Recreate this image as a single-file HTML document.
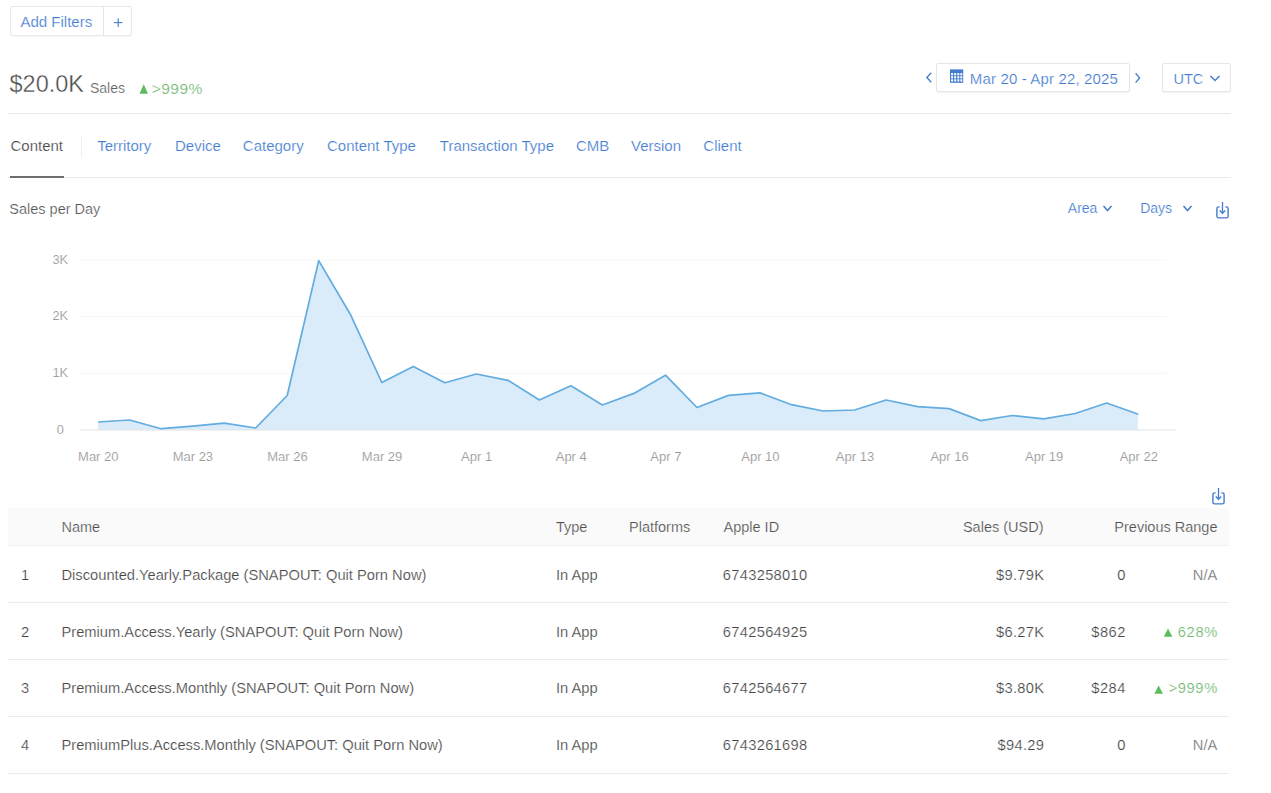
<!DOCTYPE html>
<html><head><meta charset="utf-8"><style>
html,body{margin:0;padding:0;background:#fff;width:1271px;height:793px;overflow:hidden;position:relative;font-family:"Liberation Sans",sans-serif;}
.t{position:absolute;white-space:nowrap;line-height:1;-webkit-text-stroke:0.2px #fff;}
.box{position:absolute;box-sizing:border-box;}
.hl{position:absolute;height:1px;}
.vl{position:absolute;width:1px;}
</style></head><body>
<div class="box" style="left:9.8px;top:6px;width:122.6px;height:29.6px;border:1px solid #e8e8e8;border-radius:2px;box-shadow:0 1px 1px rgba(0,0,0,0.03)"></div>
<div class="vl" style="left:103px;top:7px;height:28px;background:#e6e6e6"></div>
<div class="t" style="left:20.50px;top:14.30px;font-size:15px;color:#437bcf;">Add Filters</div>
<svg style="position:absolute;left:110px;top:14px" width="16" height="16"><line x1="4" y1="8.6" x2="12.4" y2="8.6" stroke="#437bcf" stroke-width="1.1"/><line x1="8.2" y1="4.3" x2="8.2" y2="12.9" stroke="#437bcf" stroke-width="1.1"/></svg>
<div class="t" style="left:9.50px;top:73.11px;font-size:23.5px;color:#4a4a4a;-webkit-text-stroke:0.35px #fff">$20.0K</div>
<div class="t" style="left:90.00px;top:81.15px;font-size:14px;color:#606060;">Sales</div>
<svg style="position:absolute;left:139px;top:84px" width="10" height="10"><polygon points="0.5,9.8 4.75,0.3 9,9.8" fill="#5cbd5c"/></svg>
<div class="t" style="left:151.80px;top:80.88px;font-size:15.5px;color:#6db66d;letter-spacing:0.45px">&gt;999%</div>
<div class="hl" style="left:8px;top:113px;width:1223px;background:#e8e8e8"></div>
<svg style="position:absolute;left:924px;top:72px" width="10" height="14"><polyline points="7.2,0.8 2.9,5.5 7.2,10.2" fill="none" stroke="#437bcf" stroke-width="1.35"/></svg>
<div class="box" style="left:936.3px;top:63px;width:193.5px;height:28.7px;border:1px solid #e6e6e6;border-radius:2px;box-shadow:0 1px 1px rgba(0,0,0,0.05)"></div>
<svg style="position:absolute;left:950px;top:69px" width="14" height="14" viewBox="0 0 14 14"><rect x="0" y="0.4" width="13.2" height="13.4" fill="#437bcf"/><rect x="1.1" y="4.1" width="2" height="2.2" fill="#fff"/><rect x="4.2" y="4.1" width="2" height="2.2" fill="#fff"/><rect x="7.3" y="4.1" width="2" height="2.2" fill="#fff"/><rect x="10.3" y="4.1" width="2" height="2.2" fill="#fff"/><rect x="1.1" y="7.2" width="2" height="2.2" fill="#fff"/><rect x="4.2" y="7.2" width="2" height="2.2" fill="#fff"/><rect x="7.3" y="7.2" width="2" height="2.2" fill="#fff"/><rect x="10.3" y="7.2" width="2" height="2.2" fill="#fff"/><rect x="1.1" y="10.3" width="2" height="2.2" fill="#fff"/><rect x="4.2" y="10.3" width="2" height="2.2" fill="#fff"/><rect x="7.3" y="10.3" width="2" height="2.2" fill="#fff"/><rect x="10.3" y="10.3" width="2" height="2.2" fill="#fff"/></svg>
<div class="t" style="left:969.80px;top:70.60px;font-size:15px;color:#437bcf;letter-spacing:0.15px">Mar 20 - Apr 22, 2025</div>
<svg style="position:absolute;left:1133px;top:72px" width="10" height="14"><polyline points="2.6,1.2 6.6,5.9 2.6,10.6" fill="none" stroke="#437bcf" stroke-width="1.35"/></svg>
<div class="box" style="left:1162.3px;top:63px;width:68.5px;height:28.7px;border:1px solid #e6e6e6;border-radius:2px;box-shadow:0 1px 1px rgba(0,0,0,0.05)"></div>
<div class="t" style="left:1173.50px;top:71.93px;font-size:14.5px;color:#437bcf;">UTC</div>
<svg style="position:absolute;left:1209px;top:74px" width="13" height="9"><polyline points="1.5,2 6,6.5 10.5,2" fill="none" stroke="#437bcf" stroke-width="1.5"/></svg>
<div class="t" style="left:10.50px;top:137.90px;font-size:15px;color:#454545;">Content</div>
<div class="t" style="left:97.20px;top:137.90px;font-size:15px;color:#437bcf;">Territory</div>
<div class="t" style="left:175.00px;top:137.90px;font-size:15px;color:#437bcf;">Device</div>
<div class="t" style="left:242.80px;top:137.90px;font-size:15px;color:#437bcf;">Category</div>
<div class="t" style="left:327.00px;top:137.90px;font-size:15px;color:#437bcf;">Content Type</div>
<div class="t" style="left:439.80px;top:137.90px;font-size:15px;color:#437bcf;">Transaction Type</div>
<div class="t" style="left:576.00px;top:137.90px;font-size:15px;color:#437bcf;">CMB</div>
<div class="t" style="left:631.00px;top:137.90px;font-size:15px;color:#437bcf;">Version</div>
<div class="t" style="left:703.30px;top:137.90px;font-size:15px;color:#437bcf;">Client</div>
<div class="vl" style="left:81px;top:135px;height:23px;background:#f1f1f1"></div>
<div class="hl" style="left:8px;top:177px;width:1223px;background:#ebebeb"></div>
<div class="box" style="left:9.5px;top:176px;width:54.5px;height:2px;background:#6e6e6e"></div>
<div class="t" style="left:9.30px;top:201.93px;font-size:14.5px;color:#555;">Sales per Day</div>
<div class="t" style="left:1067.80px;top:200.95px;font-size:14px;color:#437bcf;">Area</div>
<svg style="position:absolute;left:1102px;top:204px" width="11" height="9"><polyline points="1.5,2 5.5,6.5 9.5,2" fill="none" stroke="#437bcf" stroke-width="1.5"/></svg>
<div class="t" style="left:1140.20px;top:200.95px;font-size:14px;color:#437bcf;">Days</div>
<svg style="position:absolute;left:1182px;top:204px" width="11" height="9"><polyline points="1.5,2 5.5,6.5 9.5,2" fill="none" stroke="#437bcf" stroke-width="1.5"/></svg>
<svg style="position:absolute;left:1215px;top:201px" width="16" height="19" viewBox="0 0 16 19"><path d="M4.6 5.9 H3.6 Q1.9 5.9 1.9 7.6 V15.2 Q1.9 16.9 3.6 16.9 H11.4 Q13.1 16.9 13.1 15.2 V7.6 Q13.1 5.9 11.4 5.9 H10.4" fill="none" stroke="#437bcf" stroke-width="1.4"/><line x1="7.5" y1="1" x2="7.5" y2="12" stroke="#437bcf" stroke-width="1.3"/><polyline points="4.8,9.5 7.5,12.2 10.2,9.5" fill="none" stroke="#437bcf" stroke-width="1.4"/></svg>
<svg style="position:absolute;left:0;top:0" width="1271" height="793"><line x1="78" y1="260" x2="1167" y2="260" stroke="#f6f6f6" stroke-width="1"/><line x1="78" y1="316.7" x2="1167" y2="316.7" stroke="#f6f6f6" stroke-width="1"/><line x1="78" y1="373.3" x2="1167" y2="373.3" stroke="#f6f6f6" stroke-width="1"/><polygon points="98,430 98.1,422.0 129.6,420.0 161.1,428.7 192.7,426.2 224.2,423.2 255.7,428.0 287.2,395.5 318.7,260.6 350.3,314.2 381.8,382.5 413.3,366.4 444.8,382.8 476.3,374.0 507.9,380.3 539.4,400.0 570.9,385.8 602.4,405.0 633.9,393.4 665.5,375.2 697.0,407.5 728.5,395.4 760.0,392.9 791.5,404.7 823.1,411.0 854.6,410.0 886.1,400.0 917.6,406.7 949.1,408.6 980.7,420.6 1012.2,415.5 1043.7,418.8 1075.2,413.5 1106.7,403.0 1138.3,414.3 1137.5,430" fill="#daecfa"/><line x1="80" y1="430" x2="1176" y2="430" stroke="#e3e3e3" stroke-width="1.2"/><polyline points="98.1,422.0 129.6,420.0 161.1,428.7 192.7,426.2 224.2,423.2 255.7,428.0 287.2,395.5 318.7,260.6 350.3,314.2 381.8,382.5 413.3,366.4 444.8,382.8 476.3,374.0 507.9,380.3 539.4,400.0 570.9,385.8 602.4,405.0 633.9,393.4 665.5,375.2 697.0,407.5 728.5,395.4 760.0,392.9 791.5,404.7 823.1,411.0 854.6,410.0 886.1,400.0 917.6,406.7 949.1,408.6 980.7,420.6 1012.2,415.5 1043.7,418.8 1075.2,413.5 1106.7,403.0 1138.3,414.3" fill="none" stroke="#62ace0" stroke-width="1.7" stroke-linejoin="round"/></svg>
<div class="t" style="left:60.30px;transform:translateX(-50%);top:253.76px;font-size:12.8px;color:#9c9c9c;-webkit-text-stroke:0.1px #fff">3K</div>
<div class="t" style="left:60.30px;transform:translateX(-50%);top:310.46px;font-size:12.8px;color:#9c9c9c;-webkit-text-stroke:0.1px #fff">2K</div>
<div class="t" style="left:60.30px;transform:translateX(-50%);top:367.06px;font-size:12.8px;color:#9c9c9c;-webkit-text-stroke:0.1px #fff">1K</div>
<div class="t" style="left:60.30px;transform:translateX(-50%);top:423.76px;font-size:12.8px;color:#9c9c9c;-webkit-text-stroke:0.1px #fff">0</div>
<div class="t" style="left:98.30px;transform:translateX(-50%);top:449.90px;font-size:13px;color:#9c9c9c;-webkit-text-stroke:0.1px #fff">Mar 20</div>
<div class="t" style="left:192.89px;transform:translateX(-50%);top:449.90px;font-size:13px;color:#9c9c9c;-webkit-text-stroke:0.1px #fff">Mar 23</div>
<div class="t" style="left:287.48px;transform:translateX(-50%);top:449.90px;font-size:13px;color:#9c9c9c;-webkit-text-stroke:0.1px #fff">Mar 26</div>
<div class="t" style="left:382.07px;transform:translateX(-50%);top:449.90px;font-size:13px;color:#9c9c9c;-webkit-text-stroke:0.1px #fff">Mar 29</div>
<div class="t" style="left:476.66px;transform:translateX(-50%);top:449.90px;font-size:13px;color:#9c9c9c;-webkit-text-stroke:0.1px #fff">Apr 1</div>
<div class="t" style="left:571.25px;transform:translateX(-50%);top:449.90px;font-size:13px;color:#9c9c9c;-webkit-text-stroke:0.1px #fff">Apr 4</div>
<div class="t" style="left:665.84px;transform:translateX(-50%);top:449.90px;font-size:13px;color:#9c9c9c;-webkit-text-stroke:0.1px #fff">Apr 7</div>
<div class="t" style="left:760.43px;transform:translateX(-50%);top:449.90px;font-size:13px;color:#9c9c9c;-webkit-text-stroke:0.1px #fff">Apr 10</div>
<div class="t" style="left:855.02px;transform:translateX(-50%);top:449.90px;font-size:13px;color:#9c9c9c;-webkit-text-stroke:0.1px #fff">Apr 13</div>
<div class="t" style="left:949.61px;transform:translateX(-50%);top:449.90px;font-size:13px;color:#9c9c9c;-webkit-text-stroke:0.1px #fff">Apr 16</div>
<div class="t" style="left:1044.20px;transform:translateX(-50%);top:449.90px;font-size:13px;color:#9c9c9c;-webkit-text-stroke:0.1px #fff">Apr 19</div>
<div class="t" style="left:1138.79px;transform:translateX(-50%);top:449.90px;font-size:13px;color:#9c9c9c;-webkit-text-stroke:0.1px #fff">Apr 22</div>
<svg style="position:absolute;left:1211px;top:487px" width="16" height="19" viewBox="0 0 16 19"><path d="M4.6 5.9 H3.6 Q1.9 5.9 1.9 7.6 V15.2 Q1.9 16.9 3.6 16.9 H11.4 Q13.1 16.9 13.1 15.2 V7.6 Q13.1 5.9 11.4 5.9 H10.4" fill="none" stroke="#437bcf" stroke-width="1.4"/><line x1="7.5" y1="1" x2="7.5" y2="12" stroke="#437bcf" stroke-width="1.3"/><polyline points="4.8,9.5 7.5,12.2 10.2,9.5" fill="none" stroke="#437bcf" stroke-width="1.4"/></svg>
<div class="box" style="left:8px;top:507.8px;width:1221px;height:38.4px;background:#fafafa;border-bottom:1px solid #f1f1f1"></div>
<div class="t" style="left:61.50px;top:520.23px;font-size:14.5px;color:#4f4f4f;">Name</div>
<div class="t" style="left:556.00px;top:520.23px;font-size:14.5px;color:#4f4f4f;">Type</div>
<div class="t" style="left:629.00px;top:520.23px;font-size:14.5px;color:#4f4f4f;">Platforms</div>
<div class="t" style="left:723.50px;top:520.23px;font-size:14.5px;color:#4f4f4f;">Apple ID</div>
<div class="t" style="right:227.50px;top:520.23px;font-size:14.5px;color:#4f4f4f;">Sales (USD)</div>
<div class="t" style="right:53.50px;top:520.23px;font-size:14.5px;color:#4f4f4f;">Previous Range</div>
<div class="t" style="right:1241.80px;top:568.06px;font-size:14.7px;color:#454545;">1</div>
<div class="t" style="left:61.50px;top:568.06px;font-size:14.7px;color:#454545;">Discounted.Yearly.Package (SNAPOUT: Quit Porn Now)</div>
<div class="t" style="left:556.00px;top:568.06px;font-size:14.7px;color:#454545;">In App</div>
<div class="t" style="left:722.80px;top:568.06px;font-size:14.7px;color:#454545;letter-spacing:0.3px">6743258010</div>
<div class="t" style="right:226.70px;top:568.06px;font-size:14.7px;color:#454545;letter-spacing:0.3px">$9.79K</div>
<div class="t" style="right:145.10px;top:568.06px;font-size:14.7px;color:#454545;letter-spacing:0.5px">0</div>
<div class="t" style="right:53.70px;top:568.06px;font-size:14.7px;color:#707070;">N/A</div>
<div class="hl" style="left:8px;top:602.0px;width:1221px;background:#ebebeb"></div>
<div class="t" style="right:1241.80px;top:624.76px;font-size:14.7px;color:#454545;">2</div>
<div class="t" style="left:61.50px;top:624.76px;font-size:14.7px;color:#454545;">Premium.Access.Yearly (SNAPOUT: Quit Porn Now)</div>
<div class="t" style="left:556.00px;top:624.76px;font-size:14.7px;color:#454545;">In App</div>
<div class="t" style="left:722.80px;top:624.76px;font-size:14.7px;color:#454545;letter-spacing:0.3px">6742564925</div>
<div class="t" style="right:226.70px;top:624.76px;font-size:14.7px;color:#454545;letter-spacing:0.3px">$6.27K</div>
<div class="t" style="right:145.10px;top:624.76px;font-size:14.7px;color:#454545;letter-spacing:0.5px">$862</div>
<div class="t" style="right:53.20px;top:624.76px;font-size:14.7px;color:#6db66d;letter-spacing:0.6px">628%</div>
<div class="hl" style="left:8px;top:659.0px;width:1221px;background:#ebebeb"></div>
<div class="t" style="right:1241.80px;top:681.46px;font-size:14.7px;color:#454545;">3</div>
<div class="t" style="left:61.50px;top:681.46px;font-size:14.7px;color:#454545;">Premium.Access.Monthly (SNAPOUT: Quit Porn Now)</div>
<div class="t" style="left:556.00px;top:681.46px;font-size:14.7px;color:#454545;">In App</div>
<div class="t" style="left:722.80px;top:681.46px;font-size:14.7px;color:#454545;letter-spacing:0.3px">6742564677</div>
<div class="t" style="right:226.70px;top:681.46px;font-size:14.7px;color:#454545;letter-spacing:0.3px">$3.80K</div>
<div class="t" style="right:145.10px;top:681.46px;font-size:14.7px;color:#454545;letter-spacing:0.5px">$284</div>
<div class="t" style="right:53.20px;top:681.46px;font-size:14.7px;color:#6db66d;letter-spacing:0.6px">&gt;999%</div>
<div class="hl" style="left:8px;top:716.0px;width:1221px;background:#ebebeb"></div>
<div class="t" style="right:1241.80px;top:738.16px;font-size:14.7px;color:#454545;">4</div>
<div class="t" style="left:61.50px;top:738.16px;font-size:14.7px;color:#454545;">PremiumPlus.Access.Monthly (SNAPOUT: Quit Porn Now)</div>
<div class="t" style="left:556.00px;top:738.16px;font-size:14.7px;color:#454545;">In App</div>
<div class="t" style="left:722.80px;top:738.16px;font-size:14.7px;color:#454545;letter-spacing:0.3px">6743261698</div>
<div class="t" style="right:226.70px;top:738.16px;font-size:14.7px;color:#454545;letter-spacing:0.3px">$94.29</div>
<div class="t" style="right:145.10px;top:738.16px;font-size:14.7px;color:#454545;letter-spacing:0.5px">0</div>
<div class="t" style="right:53.70px;top:738.16px;font-size:14.7px;color:#707070;">N/A</div>
<div class="hl" style="left:8px;top:773.0px;width:1221px;background:#ebebeb"></div>
<svg style="position:absolute;left:1163px;top:627px" width="10" height="10"><polygon points="0.8,9.7 5,1.4 9.4,9.7" fill="#5cbd5c"/></svg>
<svg style="position:absolute;left:1154px;top:684px" width="10" height="10"><polygon points="0.4,9.7 4.6,1.4 9,9.7" fill="#5cbd5c"/></svg>
</body></html>
